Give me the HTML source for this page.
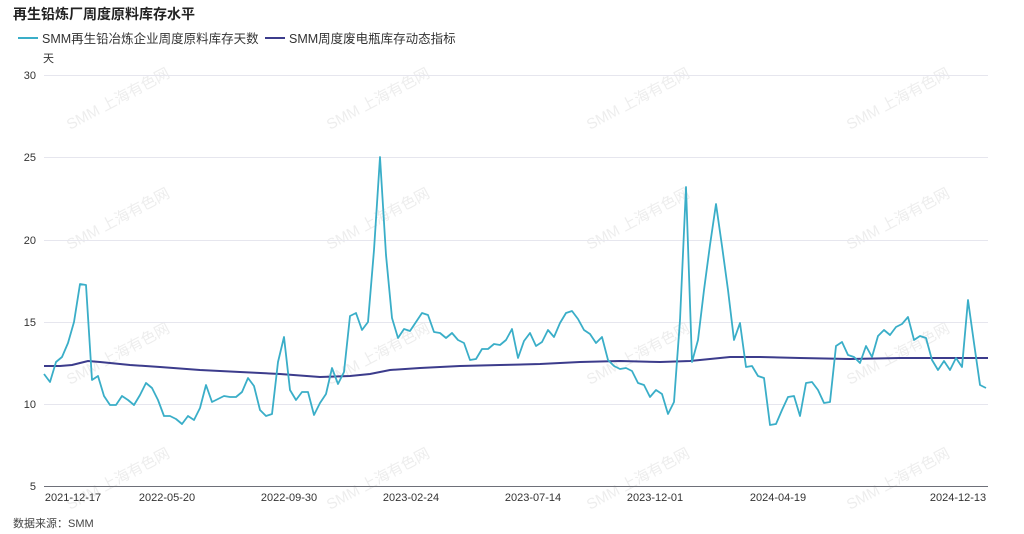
<!DOCTYPE html>
<html><head><meta charset="utf-8"><style>
html,body{margin:0;padding:0;background:#fff;width:1024px;height:534px;overflow:hidden}
svg{display:block;font-family:"Liberation Sans","Noto Sans CJK SC",sans-serif}
</style></head><body>
<svg width="1024" height="534" viewBox="0 0 1024 534">
<text x="13" y="19" font-size="14" font-weight="bold" fill="#222">再生铅炼厂周度原料库存水平</text>
<line x1="18" y1="38" x2="38" y2="38" stroke="#3aaec8" stroke-width="2"/>
<text x="42" y="43" font-size="12.5" fill="#333">SMM再生铅冶炼企业周度原料库存天数</text>
<line x1="265" y1="38" x2="285" y2="38" stroke="#3c3c8c" stroke-width="2"/>
<text x="289" y="43" font-size="12.5" fill="#333">SMM周度废电瓶库存动态指标</text>
<text x="43" y="62" font-size="11" fill="#333">天</text>
<g fill="#e2e2e2" font-size="15" opacity="0.6">
<text transform="translate(70,130) rotate(-28)">SMM 上海有色网</text>
<text transform="translate(330,130) rotate(-28)">SMM 上海有色网</text>
<text transform="translate(590,130) rotate(-28)">SMM 上海有色网</text>
<text transform="translate(850,130) rotate(-28)">SMM 上海有色网</text>
<text transform="translate(70,250) rotate(-28)">SMM 上海有色网</text>
<text transform="translate(330,250) rotate(-28)">SMM 上海有色网</text>
<text transform="translate(590,250) rotate(-28)">SMM 上海有色网</text>
<text transform="translate(850,250) rotate(-28)">SMM 上海有色网</text>
<text transform="translate(70,385) rotate(-28)">SMM 上海有色网</text>
<text transform="translate(330,385) rotate(-28)">SMM 上海有色网</text>
<text transform="translate(590,385) rotate(-28)">SMM 上海有色网</text>
<text transform="translate(850,385) rotate(-28)">SMM 上海有色网</text>
<text transform="translate(70,510) rotate(-28)">SMM 上海有色网</text>
<text transform="translate(330,510) rotate(-28)">SMM 上海有色网</text>
<text transform="translate(590,510) rotate(-28)">SMM 上海有色网</text>
<text transform="translate(850,510) rotate(-28)">SMM 上海有色网</text>
</g>
<g stroke="#e6e6ee" stroke-width="1">
<line x1="44" y1="75.5" x2="988" y2="75.5"/>
<line x1="44" y1="157.5" x2="988" y2="157.5"/>
<line x1="44" y1="240.5" x2="988" y2="240.5"/>
<line x1="44" y1="322.5" x2="988" y2="322.5"/>
<line x1="44" y1="404.5" x2="988" y2="404.5"/>
</g>
<line x1="44" y1="486.5" x2="988" y2="486.5" stroke="#6e7079" stroke-width="1"/>
<g font-size="11" fill="#333" text-anchor="end">
<text x="36" y="79">30</text><text x="36" y="161">25</text><text x="36" y="244">20</text>
<text x="36" y="326">15</text><text x="36" y="408">10</text><text x="36" y="490">5</text>
</g>
<g font-size="11" fill="#333" text-anchor="middle">
<text x="73" y="501">2021-12-17</text><text x="167" y="501">2022-05-20</text>
<text x="289" y="501">2022-09-30</text><text x="411" y="501">2023-02-24</text>
<text x="533" y="501">2023-07-14</text><text x="655" y="501">2023-12-01</text>
<text x="778" y="501">2024-04-19</text><text x="958" y="501">2024-12-13</text>
</g>
<text x="13" y="527" font-size="11" fill="#444">数据来源：SMM</text>
<polyline fill="none" stroke="#3c3c8c" stroke-width="2" points="44,366 60,366 72,365 80,363 88,361 100,362 110,363 130,365 160,367 200,370 240,372 280,374 320,377 350,376 370,374 380,372 390,370 420,368 460,366 500,365 540,364 580,362 620,361 660,362 690,361 710,359 730,357 760,357 800,358 850,359 900,358 940,358 988,358"/>
<polyline fill="none" stroke="#3aaec8" stroke-width="1.8" stroke-linejoin="round" points="44,374 50,382 56,362 62,357 68,343 74,322 80,284 86,285 92,380 98,376 104,396 110,405 116,405 122,396 128,400 134,405 140,395 146,383 152,388 158,400 164,416 170,416 176,419 182,424 188,416 194,420 200,408 206,385 212,402 218,399 224,396 230,397 236,397 242,392 248,378 254,386 260,410 266,416 272,414 278,362 284,337 290,390 296,400 302,392 308,392 314,415 320,403 326,394 332,368 338,384 344,372 350,316 356,313 362,330 368,322 374,250 380,157 386,255 392,318 398,338 404,329 410,331 416,322 422,313 428,315 434,332 440,333 446,338 452,333 458,340 464,343 470,360 476,359 482,349 488,349 494,344 500,345 506,340 512,329 518,358 524,341 530,333 536,346 542,342 548,330 554,337 560,323 566,313 572,311 578,319 584,330 590,334 596,343 602,337 608,360 614,366 620,369 626,368 632,371 638,383 644,385 650,397 656,390 662,394 668,414 674,402 680,320 686,187 692,362 698,340 704,290 710,245 716,204 722,246 728,290 734,340 740,323 746,367 752,366 758,376 764,378 770,425 776,424 782,410 788,397 794,396 800,416 806,383 812,382 818,390 824,403 830,402 836,346 842,342 848,355 854,357 860,363 866,346 872,357 878,336 884,330 890,335 896,327 902,324 908,317 914,340 920,336 926,338 932,360 938,370 944,361 950,370 956,358 962,367 968,300 974,343 980,385 986,388"/>
</svg>
</body></html>
